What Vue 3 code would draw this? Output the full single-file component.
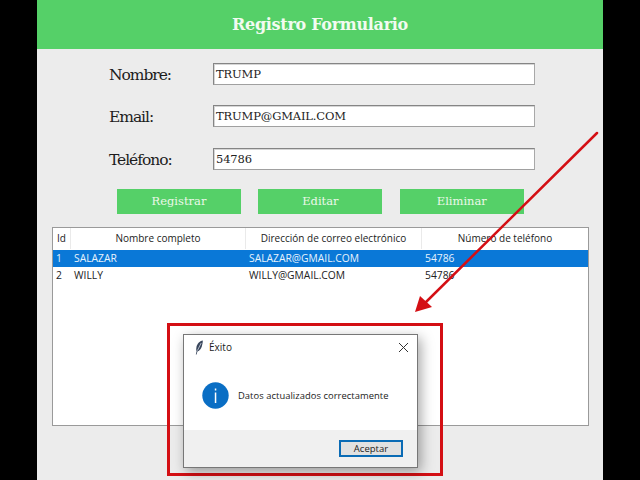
<script setup>
const fields = [
  { label: 'Nombre:', value: 'TRUMP' },
  { label: 'Email:', value: 'TRUMP@GMAIL.COM' },
  { label: 'Teléfono:', value: '54786' },
]
const buttons = ['Registrar', 'Editar', 'Eliminar']
const columns = ['Id', 'Nombre completo', 'Dirección de correo electrónico', 'Número de teléfono']
const rows = [
  { id: 1, name: 'SALAZAR', email: 'SALAZAR@GMAIL.COM', phone: '54786', selected: true },
  { id: 2, name: 'WILLY', email: 'WILLY@GMAIL.COM', phone: '54786', selected: false },
]
</script>

<template>
  <div class="screen">
    <main class="app">
      <header class="banner">Registro Formulario</header>
      <section class="form">
        <div v-for="f in fields" :key="f.label" class="field">
          <label class="label">{{ f.label }}</label>
          <div class="input">{{ f.value }}</div>
        </div>
      </section>
      <div class="actions">
        <button v-for="b in buttons" :key="b" class="action">{{ b }}</button>
      </div>
      <section class="table">
        <div class="thead grid">
          <div v-for="c in columns" :key="c" class="th">{{ c }}</div>
        </div>
        <div v-for="r in rows" :key="r.id" class="tr grid" :class="{ selected: r.selected }">
          <div class="td">{{ r.id }}</div>
          <div class="td">{{ r.name }}</div>
          <div class="td">{{ r.email }}</div>
          <div class="td">{{ r.phone }}</div>
        </div>
      </section>

      <svg class="arrow" width="640" height="480" viewBox="0 0 640 480">
        <line x1="597" y1="133" x2="426" y2="302" stroke="#d40f14" stroke-width="2.5" stroke-linecap="round" />
        <path d="M415 312 L420 296 L432 307 Z" fill="#d40f14" />
      </svg>

      <div class="highlight"></div>

      <div class="dialog">
        <div class="titlebar">
          <svg class="feather" width="10" height="15" viewBox="0 0 10 15">
            <path d="M8.8 0.6 C5.6 1.2 3 4 2.4 7.4 C2.1 9.2 2.2 10.4 2.6 11.2 L1.8 14.4 L2.6 14.6 L3.4 11.6 C5.6 10.8 7.2 8.8 7.9 6.2 C8.4 4.2 8.9 2.2 8.8 0.6 Z" fill="#39465c" />
            <path d="M7.2 3 L3.4 10.6" stroke="#cfd6e2" stroke-width="0.8" fill="none" />
          </svg>
          <span class="dialog-title">Éxito</span>
          <svg class="close" width="11" height="11" viewBox="0 0 11 11">
            <path d="M1 1 L10 10 M10 1 L1 10" stroke="#333" stroke-width="1" fill="none" />
          </svg>
        </div>
        <div class="dialog-body">
          <svg width="27" height="27" viewBox="0 0 27 27">
            <circle cx="13.5" cy="13.5" r="13.2" fill="#0a6ec4" />
            <rect x="12.8" y="10.5" width="1.5" height="10.5" fill="#fff" />
            <rect x="12.8" y="6.5" width="1.5" height="2" fill="#fff" />
          </svg>
          <span class="message">Datos actualizados correctamente</span>
        </div>
        <div class="dialog-foot">
          <button class="accept">Aceptar</button>
        </div>
      </div>
    </main>
  </div>
</template>

<style>
html, body { margin: 0; background: #000; }
</style>

<style scoped>
.screen {
  width: 640px;
  height: 480px;
  background: #000;
  display: flex;
  justify-content: flex-start;
  overflow: hidden;
}
.app {
  width: 566px;
  height: 480px;
  margin-left: 37px;
  background: #ececec;
  display: flex;
  flex-direction: column;
}
.banner {
  height: 49px;
  background: #55d068;
  color: #f2fbf0;
  font: bold 16px/50px "DejaVu Serif", serif;
  letter-spacing: -0.3px;
  text-align: center;
}
.form {
  display: flex;
  flex-direction: column;
  gap: 20.4px;
  padding: 14px 0 0 73px;
}
.field {
  display: flex;
  align-items: center;
  height: 22px;
}
.label {
  width: 103px;
  padding-top: 2px;
  margin-left: -1px;
  margin-right: 1px;
  font: 15.5px "DejaVu Serif", serif;
  letter-spacing: -1.05px;
  color: #1c1c1c;
}
.input {
  width: 318px;
  height: 20px;
  background: #fff;
  border: 1px solid #858585;
  border-right-color: #a8a8a8;
  border-bottom-color: #a0a0a0;
  box-shadow: inset 1px 1px 0 #d6d6d6;
  padding-left: 2px;
  font: 11.5px/21px "DejaVu Serif", serif;
  letter-spacing: -0.15px;
  color: #222;
}
.actions {
  display: flex;
  gap: 17.4px;
  padding: 19.2px 0 0 80px;
}
.action {
  width: 124px;
  height: 25px;
  padding: 0;
  border: 0;
  background: #55d068;
  color: #ecf8e8;
  font: 11.5px "DejaVu Serif", serif;
}
.table {
  width: 535px;
  height: 197px;
  margin: 13px 0 0 15px;
  background: #fff;
  border: 1px solid #9a9a9a;
  font-family: "Open Sans", "Noto Sans", sans-serif;
  font-size: 10px;
}
.grid {
  display: grid;
  grid-template-columns: 18px 175px 176px 1fr;
}
.thead {
  height: 21px;
  align-items: center;
  color: #222;
}
.th {
  height: 21px;
  line-height: 21px;
  text-align: center;
  border-right: 1px solid #eaeaea;
  box-sizing: border-box;
}
.th:last-child { border-right: 0; }
.tr {
  height: 17px;
  line-height: 17px;
  color: #222;
  font-size: 10.3px;
}
.tr.selected {
  background: #0a78d7;
  color: #e8f3fc;
  margin-top: 1px;
}
.td { padding-left: 3px; }
.arrow {
  position: absolute;
  left: 0;
  top: 0;
  pointer-events: none;
}
.highlight {
  position: absolute;
  left: 167px;
  top: 323px;
  width: 270px;
  height: 147px;
  border: 3px solid #d40f14;
}
.dialog {
  position: absolute;
  left: 183px;
  top: 334px;
  width: 233px;
  height: 132px;
  background: #fff;
  border: 1px solid #777;
  box-shadow: 3px 4px 12px rgba(0, 0, 0, 0.35);
  display: flex;
  flex-direction: column;
  font-family: "Open Sans", "Noto Sans", sans-serif;
  color: #222;
}
.titlebar {
  height: 24px;
  display: flex;
  align-items: center;
  padding: 0 8px 0 10px;
}
.feather { flex: none; }
.dialog-title {
  margin-left: 5px;
  font-size: 10px;
  flex: 1;
}
.dialog-body {
  flex: 1;
  display: flex;
  align-items: center;
  gap: 9px;
  padding: 1px 0 0 18px;
}
.message {
  font-size: 9.4px;
  letter-spacing: 0.05px;
}
.dialog-foot {
  height: 37px;
  background: #f0f0f0;
  display: flex;
  justify-content: flex-end;
  align-items: flex-start;
  padding: 10px 14px 0 0;
  box-sizing: border-box;
}
.accept {
  width: 64px;
  height: 17px;
  padding: 0;
  background: #e1e1e1;
  border: 2px solid #0a6bb5;
  font: 9.5px "Open Sans", "Noto Sans", sans-serif;
  color: #222;
}
</style>
